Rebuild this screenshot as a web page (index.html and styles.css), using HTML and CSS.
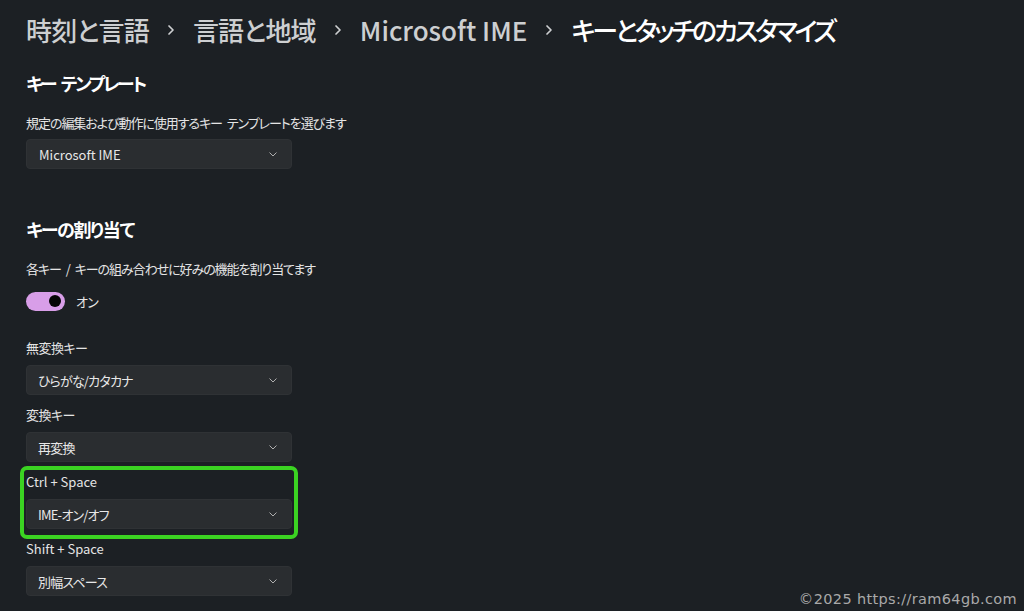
FILE: index.html
```html
<!DOCTYPE html>
<html lang="ja">
<head>
<meta charset="utf-8">
<link rel="stylesheet" href="styles.css">
</head>
<body>
<main class="page">
  <h1 class="crumbs">
    <span class="crumb ja">時刻と言語</span>
    <svg class="sep" width="8" height="12" viewBox="0 0 8 12"><path d="M2 2l4 4-4 4" fill="none" stroke="currentColor" stroke-width="1.7" stroke-linecap="round" stroke-linejoin="round"/></svg>
    <span class="crumb ja">言語と地域</span>
    <svg class="sep" width="8" height="12" viewBox="0 0 8 12"><path d="M2 2l4 4-4 4" fill="none" stroke="currentColor" stroke-width="1.7" stroke-linecap="round" stroke-linejoin="round"/></svg>
    <span class="crumb">Microsoft IME</span>
    <svg class="sep" width="8" height="12" viewBox="0 0 8 12"><path d="M2 2l4 4-4 4" fill="none" stroke="currentColor" stroke-width="1.7" stroke-linecap="round" stroke-linejoin="round"/></svg>
    <span class="crumb current">キーとタッチのカスタマイズ</span>
  </h1>

  <h2 class="section-title first tight">キー テンプレート</h2>
  <p class="desc">規定の編集および動作に使用するキー テンプレートを選びます</p>
  <div class="combo">
    <span>Microsoft IME</span>
    <svg class="chev" width="8" height="5" viewBox="0 0 8 5"><path d="M0.8 0.8l3.2 3.2 3.2-3.2" fill="none" stroke="currentColor" stroke-width="1" stroke-linecap="round" stroke-linejoin="round"/></svg>
  </div>

  <h2 class="section-title second">キーの割り当て</h2>
  <p class="desc">各キー / キーの組み合わせに好みの機能を割り当てます</p>
  <div class="toggle-row">
    <span class="toggle"><span class="knob"></span></span>
    <span class="toggle-label">オン</span>
  </div>

  <div class="groups">
    <div class="group">
      <div class="label ja">無変換キー</div>
      <div class="combo">
        <span class="ja">ひらがな/カタカナ</span>
        <svg class="chev" width="8" height="5" viewBox="0 0 8 5"><path d="M0.8 0.8l3.2 3.2 3.2-3.2" fill="none" stroke="currentColor" stroke-width="1" stroke-linecap="round" stroke-linejoin="round"/></svg>
      </div>
    </div>
    <div class="group">
      <div class="label ja">変換キー</div>
      <div class="combo">
        <span class="ja">再変換</span>
        <svg class="chev" width="8" height="5" viewBox="0 0 8 5"><path d="M0.8 0.8l3.2 3.2 3.2-3.2" fill="none" stroke="currentColor" stroke-width="1" stroke-linecap="round" stroke-linejoin="round"/></svg>
      </div>
    </div>
    <div class="group highlight">
      <div class="label">Ctrl + Space</div>
      <div class="combo">
        <span class="ja">IME-オン/オフ</span>
        <svg class="chev" width="8" height="5" viewBox="0 0 8 5"><path d="M0.8 0.8l3.2 3.2 3.2-3.2" fill="none" stroke="currentColor" stroke-width="1" stroke-linecap="round" stroke-linejoin="round"/></svg>
      </div>
    </div>
    <div class="group">
      <div class="label">Shift + Space</div>
      <div class="combo">
        <span class="ja">別幅スペース</span>
        <svg class="chev" width="8" height="5" viewBox="0 0 8 5"><path d="M0.8 0.8l3.2 3.2 3.2-3.2" fill="none" stroke="currentColor" stroke-width="1" stroke-linecap="round" stroke-linejoin="round"/></svg>
      </div>
    </div>
  </div>
</main>
<div class="watermark">©2025 https://ram64gb.com</div>
</body>
</html>
```

FILE: styles.css
```css
html, body {
  margin: 0;
  padding: 0;
  background: #1c2024;
  height: 100%;
  overflow: hidden;
}

body {
  font-family: "Noto Sans CJK JP", "Noto Sans", sans-serif;
  font-feature-settings: "palt";
  color: #e6e6e6;
  position: relative;
}

.page {
  padding: 10px 0 0 26px;
}

.crumbs {
  margin: 0;
  height: 40px;
  display: flex;
  align-items: center;
  gap: 18px;
  font-size: 26px;
  font-weight: 500;
  line-height: 40px;
  color: #cdcfd1;
  white-space: nowrap;
}

.crumbs .ja {
  letter-spacing: -0.8px;
}

.crumbs .current {
  color: #ffffff;
  letter-spacing: -3.2px;
}

.sep {
  color: #cdcfd1;
  flex: none;
}

.section-title {
  margin: 0;
  font-size: 18px;
  font-weight: 700;
  line-height: 28px;
  color: #ffffff;
  letter-spacing: -1.4px;
  word-spacing: 4px;
}

.section-title.tight {
  letter-spacing: -2.4px;
}

.section-title.first {
  margin-top: 19px;
}

.section-title.second {
  margin-top: 46px;
}

.desc {
  margin: 16px 0 0;
  font-size: 13px;
  line-height: 20px;
  color: #e4e4e4;
  letter-spacing: -1.05px;
  word-spacing: 3px;
}

.combo {
  box-sizing: border-box;
  width: 266px;
  height: 30px;
  margin-top: 6px;
  padding: 0 14px 0 12px;
  display: flex;
  align-items: center;
  justify-content: space-between;
  background: #2a2d30;
  border: 1px solid #2f3235;
  border-radius: 4px;
  font-size: 13px;
  color: #e8e8e8;
}

.combo .ja {
  letter-spacing: -0.8px;
  margin-left: -1px;
}

.chev {
  color: #b0b0b0;
}

.toggle-row {
  margin-top: 12px;
  height: 20px;
  display: flex;
  align-items: center;
  gap: 11px;
}

.toggle {
  box-sizing: border-box;
  width: 39px;
  height: 19px;
  border-radius: 10px;
  background: #d89ee8;
  display: flex;
  align-items: center;
  justify-content: flex-end;
  padding-right: 4px;
}

.knob {
  width: 12px;
  height: 12px;
  border-radius: 50%;
  background: #050505;
}

.toggle-label {
  font-size: 13px;
  color: #e6e6e6;
  letter-spacing: -0.8px;
}

.groups {
  margin-top: 27px;
  display: flex;
  flex-direction: column;
  gap: 10px;
}

.group {
  width: 266px;
}

.group .combo {
  margin-top: 7px;
}

.label {
  font-size: 13px;
  line-height: 20px;
  color: #e4e4e4;
}

.label.ja {
  letter-spacing: -0.5px;
}

.group.highlight {
  outline: 4px solid #3bd322;
  outline-offset: 2px;
  padding-bottom: 4px;
  margin-bottom: -4px;
  border-radius: 1px;
}

.watermark {
  position: absolute;
  right: 7px;
  bottom: 3px;
  font-family: "DejaVu Sans", sans-serif;
  font-feature-settings: normal;
  font-size: 14.5px;
  line-height: 18px;
  color: #a9a9a9;
  letter-spacing: 0.35px;
}
```
